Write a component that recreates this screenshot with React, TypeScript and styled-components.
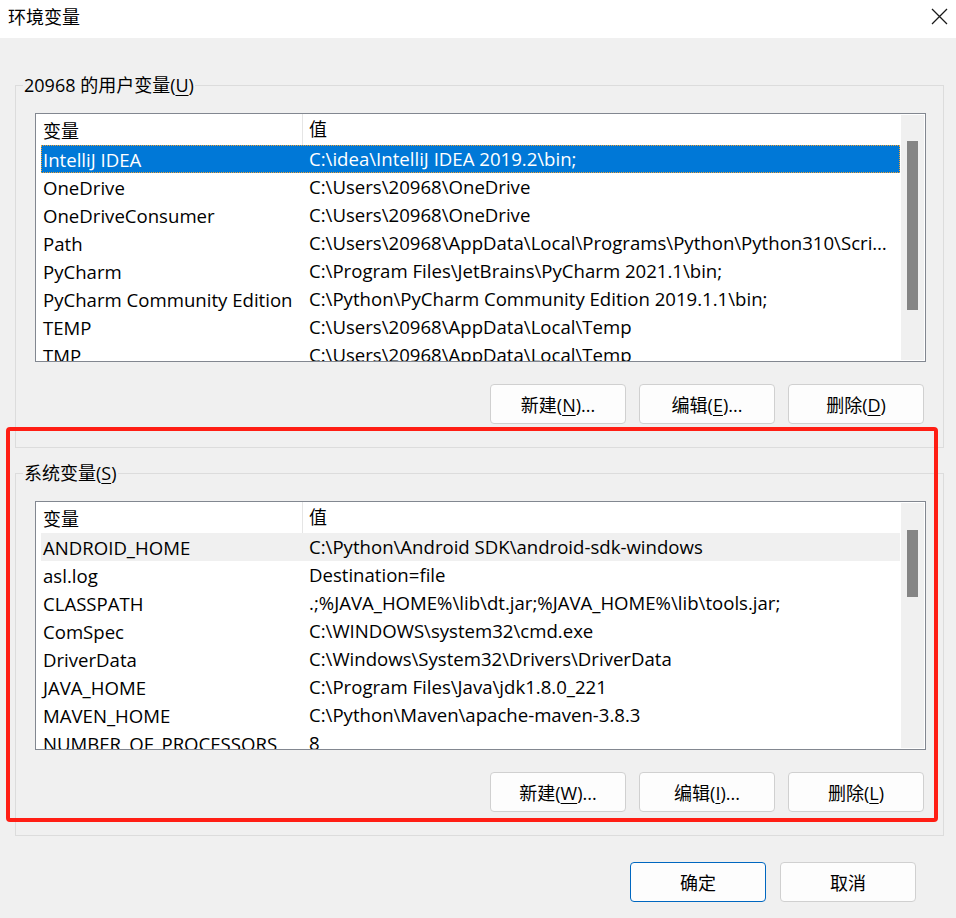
import styled, { createGlobalStyle } from 'styled-components';

const GlobalStyle = createGlobalStyle`
  body {
    margin: 0;
    background: #f0f0f0;
    font-family: "Open Sans", "Noto Sans CJK SC", sans-serif;
  }
`;

interface Variable {
  name: string;
  value: string;
}

const userVars: Variable[] = [
  { name: 'IntelliJ IDEA', value: 'C:\\idea\\IntelliJ IDEA 2019.2\\bin;' },
  { name: 'OneDrive', value: 'C:\\Users\\20968\\OneDrive' },
  { name: 'OneDriveConsumer', value: 'C:\\Users\\20968\\OneDrive' },
  { name: 'Path', value: 'C:\\Users\\20968\\AppData\\Local\\Programs\\Python\\Python310\\Scripts\\;C:\\Users\\20968\\AppData' },
  { name: 'PyCharm', value: 'C:\\Program Files\\JetBrains\\PyCharm 2021.1\\bin;' },
  { name: 'PyCharm Community Edition', value: 'C:\\Python\\PyCharm Community Edition 2019.1.1\\bin;' },
  { name: 'TEMP', value: 'C:\\Users\\20968\\AppData\\Local\\Temp' },
  { name: 'TMP', value: 'C:\\Users\\20968\\AppData\\Local\\Temp' },
];

const systemVars: Variable[] = [
  { name: 'ANDROID_HOME', value: 'C:\\Python\\Android SDK\\android-sdk-windows' },
  { name: 'asl.log', value: 'Destination=file' },
  { name: 'CLASSPATH', value: '.;%JAVA_HOME%\\lib\\dt.jar;%JAVA_HOME%\\lib\\tools.jar;' },
  { name: 'ComSpec', value: 'C:\\WINDOWS\\system32\\cmd.exe' },
  { name: 'DriverData', value: 'C:\\Windows\\System32\\Drivers\\DriverData' },
  { name: 'JAVA_HOME', value: 'C:\\Program Files\\Java\\jdk1.8.0_221' },
  { name: 'MAVEN_HOME', value: 'C:\\Python\\Maven\\apache-maven-3.8.3' },
  { name: 'NUMBER_OF_PROCESSORS', value: '8' },
];

type RowState = 'none' | 'focused' | 'inactive';

function VariableList({
  rows,
  selectedState,
  thumbTop,
  thumbHeight,
}: {
  rows: Variable[];
  selectedState: RowState;
  thumbTop: number;
  thumbHeight: number;
}) {
  return (
    <ListBox>
      <ListBody>
        <HeaderRow>
          <NameCell>变量</NameCell>
          <ValueCell $header>值</ValueCell>
        </HeaderRow>
        {rows.map((row, i) => (
          <Row key={row.name} $state={i === 0 ? selectedState : 'none'}>
            <NameCell>{row.name}</NameCell>
            <ValueCell>{row.value}</ValueCell>
          </Row>
        ))}
      </ListBody>
      <ScrollTrack>
        <ScrollThumb style={{ marginTop: thumbTop, height: thumbHeight }} />
      </ScrollTrack>
    </ListBox>
  );
}

export default function App() {
  return (
    <>
      <GlobalStyle />
      <Window>
        <TitleBar>
          <Title>环境变量</Title>
          <CloseButton>
            <svg width="17" height="17" viewBox="0 0 17 17">
              <path d="M1 1 L16 16 M16 1 L1 16" stroke="#1a1a1a" strokeWidth="1.3" fill="none" />
            </svg>
          </CloseButton>
        </TitleBar>

        <Body>
          <Group>
            <Legend>20968 的用户变量(<u>U</u>)</Legend>
            <VariableList rows={userVars} selectedState="focused" thumbTop={26} thumbHeight={169} />
            <ButtonRow>
              <Button>新建(<u>N</u>)...</Button>
              <Button>编辑(<u>E</u>)...</Button>
              <Button>删除(<u>D</u>)</Button>
            </ButtonRow>
          </Group>

          <Group $second>
            <Legend>系统变量(<u>S</u>)</Legend>
            <VariableList rows={systemVars} selectedState="inactive" thumbTop={27} thumbHeight={67} />
            <ButtonRow>
              <Button>新建(<u>W</u>)...</Button>
              <Button>编辑(<u>I</u>)...</Button>
              <Button>删除(<u>L</u>)</Button>
            </ButtonRow>
          </Group>

          <DialogButtons>
            <Button $primary>确定</Button>
            <Button>取消</Button>
          </DialogButtons>

          <Highlight />
        </Body>
      </Window>
    </>
  );
}

const Window = styled.div`
  width: 956px;
  height: 918px;
  background: #f0f0f0;
  display: flex;
  flex-direction: column;
  overflow: hidden;
`;

const TitleBar = styled.div`
  height: 38px;
  background: #ffffff;
  display: flex;
  align-items: center;
  justify-content: space-between;
  padding-left: 8px;
  flex-shrink: 0;
`;

const Title = styled.span`
  font-size: 18px;
  color: #000;
  margin-top: -6px;
`;

const CloseButton = styled.div`
  width: 33px;
  height: 38px;
  display: flex;
  align-items: center;
  justify-content: center;
  margin-top: -6px;
`;

const Body = styled.div`
  position: relative;
  flex: 1;
  display: flex;
  flex-direction: column;
  padding: 36px 12px 0 15px;
`;

const Group = styled.fieldset<{ $second?: boolean }>`
  margin: ${props => (props.$second ? '14px 0 0' : '0')};
  padding: 17px 17px 23px 7px;
  border: 1px solid #dcdcdc;
  min-width: 0;
  display: flex;
  flex-direction: column;
`;

const Legend = styled.legend`
  font-size: 18px;
  line-height: 22px;
  padding: 0 1px;
  margin: 0;
  color: #000;

  u {
    text-underline-offset: 3px;
  }
`;

const ListBox = styled.div`
  height: 249px;
  box-sizing: border-box;
  margin-left: 12px;
  border: 1px solid #828790;
  background: #ffffff;
  display: flex;
  overflow: hidden;
`;

const ListBody = styled.div`
  flex: 1;
  min-width: 0;
  padding-left: 5px;
  overflow: hidden;
`;

const HeaderRow = styled.div`
  height: 31px;
  display: flex;
  align-items: center;
  font-size: 18px;
`;

const Row = styled.div<{ $state: RowState }>`
  height: 28px;
  display: flex;
  align-items: center;
  font-size: 18.6px;
  color: ${props => (props.$state === 'focused' ? '#ffffff' : '#000000')};
  background: ${props =>
    props.$state === 'focused' ? '#0078d7' : props.$state === 'inactive' ? '#f0f0f0' : 'transparent'};
  outline: ${props => (props.$state === 'focused' ? '1px dotted #f0a030' : 'none')};
  outline-offset: -1px;
`;

const NameCell = styled.div`
  width: 261px;
  flex-shrink: 0;
  padding-left: 2px;
  box-sizing: border-box;
  white-space: nowrap;
  overflow: hidden;
`;

const ValueCell = styled.div<{ $header?: boolean }>`
  flex: 1;
  min-width: 0;
  align-self: stretch;
  padding: 0 12px 0 6px;
  white-space: nowrap;
  overflow: hidden;
  text-overflow: ellipsis;
  line-height: ${props => (props.$header ? '31px' : '28px')};
  border-left: 1px solid ${props => (props.$header ? '#e5e5e5' : 'transparent')};
`;

const ScrollTrack = styled.div`
  width: 25px;
  flex-shrink: 0;
  background: #f0f0f0;
  border: 1px solid #ffffff;
  box-sizing: border-box;
  display: flex;
  justify-content: center;
`;

const ScrollThumb = styled.div`
  width: 11px;
  background: #858585;
`;

const ButtonRow = styled.div`
  display: flex;
  justify-content: flex-end;
  gap: 13px;
  margin-top: 22px;
  padding-right: 2px;
`;

const Button = styled.button<{ $primary?: boolean }>`
  width: 136px;
  height: 40px;
  border-radius: 4px;
  border: 1px solid ${props => (props.$primary ? '#0067c0' : '#d0d0d0')};
  background: #fdfdfd;
  font-family: "Open Sans", "Noto Sans CJK SC", sans-serif;
  font-size: 18px;
  color: #000;
  padding: 0;

  u {
    text-underline-offset: 3px;
  }
`;

const DialogButtons = styled.div`
  display: flex;
  justify-content: flex-end;
  gap: 14px;
  margin-top: 26px;
  padding-right: 28px;
`;

const Highlight = styled.div`
  position: absolute;
  left: 6px;
  top: 389px;
  width: 924px;
  height: 387px;
  border: 4px solid #ff1e14;
  border-radius: 4px;
  pointer-events: none;
`;
